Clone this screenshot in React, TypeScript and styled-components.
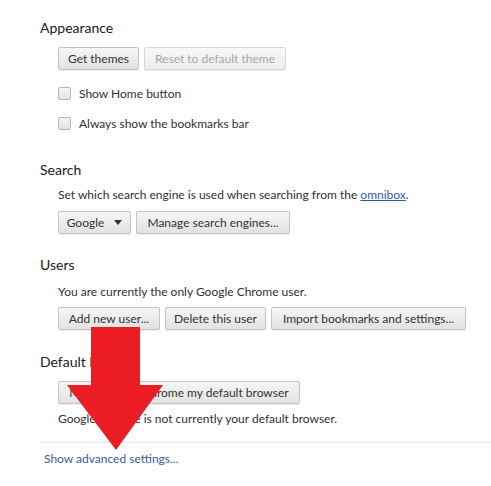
import React from "react";
import styled, { createGlobalStyle } from "styled-components";

const Global = createGlobalStyle`
  html, body { margin: 0; padding: 0; background: #fff; }
  body { font-family: Lato, "Open Sans", sans-serif; color: #303030; }
`;

const Page = styled.div`
  position: relative;
  width: 491px;
  height: 486px;
  overflow: hidden;
  padding: 18px 0 0 40px;
  box-sizing: border-box;
`;

const Section = styled.section<{ $top?: number }>`
  margin-top: ${(p) => p.$top ?? 0}px;
`;

const Heading = styled.h3`
  margin: 0;
  font-size: 14px;
  font-weight: 400;
  line-height: 20px;
  color: #202020;
`;

const Body = styled.div`
  margin-left: 18px;
  display: flex;
  flex-direction: column;
  align-items: flex-start;
`;

const Text = styled.div<{ $top?: number }>`
  margin-top: ${(p) => p.$top ?? 0}px;
  font-size: 12px;
  line-height: 18px;
  color: #303030;
  white-space: nowrap;
`;

const Link = styled.a`
  color: #2a5db0;
  text-decoration: underline;
`;

const ButtonRow = styled.div<{ $top?: number }>`
  margin-top: ${(p) => p.$top ?? 0}px;
  display: flex;
  gap: 5px;
`;

const Button = styled.button<{ $w: number }>`
  width: ${(p) => p.$w}px;
  height: 23px;
  box-sizing: border-box;
  border: 1px solid #c3c3c3;
  border-radius: 2px;
  background: linear-gradient(#f6f6f6, #e2e2e2);
  box-shadow: 0 1px 0 rgba(0, 0, 0, 0.06);
  font-family: Lato, "Open Sans", sans-serif;
  font-size: 12px;
  color: #333;
  padding: 0;
  display: flex;
  align-items: center;
  justify-content: center;
  gap: 10px;
  white-space: nowrap;
  &:disabled {
    color: #a8a8a8;
    background: linear-gradient(#f8f8f8, #ececec);
    border-color: #d6d6d6;
  }
`;

const Caret = styled.span`
  width: 0;
  height: 0;
  border-left: 4px solid transparent;
  border-right: 4px solid transparent;
  border-top: 5px solid #333;
`;

const CheckRow = styled.label<{ $top?: number }>`
  margin-top: ${(p) => p.$top ?? 0}px;
  display: flex;
  align-items: center;
  gap: 8px;
  height: 20px;
  font-size: 12px;
  color: #303030;
`;

const Box = styled.span`
  width: 13px;
  height: 13px;
  box-sizing: border-box;
  border: 1px solid #b5b5b5;
  border-radius: 2px;
  background: linear-gradient(#f4f4f4, #e4e4e4);
`;

const Footer = styled.div`
  margin-top: 14px;
  border-top: 1px solid #e8e8e8;
  padding: 4px 0 0 4px;
`;

const AdvancedLink = styled.a`
  font-size: 12px;
  line-height: 18px;
  color: #3a5a9a;
  text-decoration: none;
`;

const Arrow = styled.svg`
  position: absolute;
  left: 0;
  top: 0;
  pointer-events: none;
`;

export default function App() {
  return (
    <>
      <Global />
      <Page>
        <Section>
          <Heading>Appearance</Heading>
          <Body>
            <ButtonRow $top={9}>
              <Button $w={81}>Get themes</Button>
              <Button $w={142} disabled>Reset to default theme</Button>
            </ButtonRow>
            <CheckRow $top={13}>
              <Box />
              Show Home button
            </CheckRow>
            <CheckRow $top={10}>
              <Box />
              Always show the bookmarks bar
            </CheckRow>
          </Body>
        </Section>

        <Section $top={27}>
          <Heading>Search</Heading>
          <Body>
            <Text $top={6}>
              Set which search engine is used when searching from the <Link>omnibox</Link>.
            </Text>
            <ButtonRow $top={7}>
              <Button $w={73}>
                Google <Caret />
              </Button>
              <Button $w={154}>Manage search engines...</Button>
            </ButtonRow>
          </Body>
        </Section>

        <Section $top={21}>
          <Heading>Users</Heading>
          <Body>
            <Text $top={8}>You are currently the only Google Chrome user.</Text>
            <ButtonRow $top={6}>
              <Button $w={102}>Add new user...</Button>
              <Button $w={101}>Delete this user</Button>
              <Button $w={195}>Import bookmarks and settings...</Button>
            </ButtonRow>
          </Body>
        </Section>

        <Section $top={22}>
          <Heading>Default browser</Heading>
          <Body>
            <ButtonRow $top={9}>
              <Button $w={242}>Make Google Chrome my default browser</Button>
            </ButtonRow>
            <Text $top={6}>Google Chrome is not currently your default browser.</Text>
          </Body>
        </Section>

        <Footer>
          <AdvancedLink>Show advanced settings...</AdvancedLink>
        </Footer>

        <Arrow width="491" height="486" viewBox="0 0 491 486">
          <polygon
            points="91,327 140,327 140,385 163,385 116,450 67,385 91,385"
            fill="#ec1c24"
          />
        </Arrow>
      </Page>
    </>
  );
}
